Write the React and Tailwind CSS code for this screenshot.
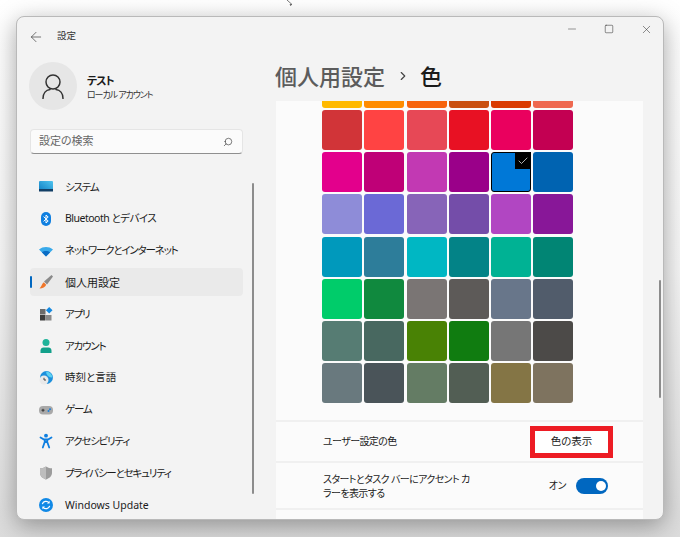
import React from "react";
import { ArrowLeft, Check, ChevronRight, Minus, Search, Square, X } from "lucide-react";

const FONT = "font-['Noto_Sans','Noto_Sans_CJK_JP',sans-serif] [font-feature-settings:'palt']";

const SWATCHES = [
  ["#ffb900", "#ff8c00", "#f7630c", "#ca5010", "#da3b01", "#ef6950"],
  ["#d13438", "#ff4343", "#e74856", "#e81123", "#ea005e", "#c30052"],
  ["#e3008c", "#bf0077", "#c239b3", "#9a0089", "#0078d7", "#0063b1"],
  ["#8e8cd8", "#6b69d6", "#8764b8", "#744da9", "#b146c2", "#881798"],
  ["#0099bc", "#2d7d9a", "#00b7c3", "#038387", "#00b294", "#018574"],
  ["#00cc6a", "#10893e", "#7a7574", "#5d5a58", "#68768a", "#515c6b"],
  ["#567c73", "#486860", "#498205", "#107c10", "#767676", "#4c4a48"],
  ["#69797e", "#4a5459", "#647c64", "#525e54", "#847545", "#7e735f"],
];

// colourful settings icons, drawn on a 16 box
const icons = {
  system: (
    <svg width="16" height="16" viewBox="0 0 16 16">
      <defs>
        <linearGradient id="sys" x1="0" y1="1" x2="1" y2="0">
          <stop offset="0" stopColor="#0f7fc4" />
          <stop offset="1" stopColor="#4fc3ee" />
        </linearGradient>
      </defs>
      <rect x="1" y="2" width="14" height="10" rx="1" fill="url(#sys)" />
      <rect x="1" y="10" width="14" height="2.5" fill="#123f66" />
    </svg>
  ),
  bluetooth: (
    <svg width="16" height="16" viewBox="0 0 16 16">
      <rect x="3" y="1" width="10" height="14" rx="5" fill="#0f7fe0" />
      <path d="M5.6 5.6 10.2 10 8 12V4l2.2 2-4.6 4.4" fill="none" stroke="#fff" strokeWidth="1" />
    </svg>
  ),
  wifi: (
    <svg width="16" height="16" viewBox="0 0 16 16">
      <path d="M1 6.5C5 3.2 11 3.2 15 6.5L8 13.5Z" fill="#38a9ea" />
      <path d="M3.8 9.3C6.2 7.5 9.8 7.5 12.2 9.3L8 13.5Z" fill="#0a6cc4" />
    </svg>
  ),
  brush: (
    <svg width="16" height="16" viewBox="0 0 16 16">
      <path d="M13.500 1 15 2.500 9 10.500 6 7.500Z" fill="#8a8a8a" />
      <path d="M5.800 8.300 8.200 10.700C7.500 13 4.500 14.500 1.500 14.500 3.500 13 3.500 10 5.800 8.300Z" fill="#f0762a" />
    </svg>
  ),
  apps: (
    <svg width="16" height="16" viewBox="0 0 16 16">
      <rect x="2" y="3" width="5.500" height="5.500" fill="#6b6b6b" />
      <rect x="2" y="9" width="5.500" height="5.500" fill="#3d3d3d" />
      <rect x="8" y="9" width="5.500" height="5.500" fill="#8a8a8a" />
      <path d="M11.200 1 14.500 4.300 11.200 7.600 7.900 4.300Z" fill="#1489e0" />
    </svg>
  ),
  account: (
    <svg width="16" height="16" viewBox="0 0 16 16">
      <circle cx="8" cy="4.500" r="3.500" fill="#1fb39a" />
      <path d="M2.500 15v-2.500C2.500 10.500 4 9.500 5.500 9.500h5c1.500 0 3 1 3 3V15Z" fill="#12a08a" />
    </svg>
  ),
  time: (
    <svg width="16" height="16" viewBox="0 0 16 16">
      <circle cx="8.500" cy="7.500" r="6.500" fill="#1c8fdc" />
      <path d="M8 1.500a6.500 6.500 0 0 1 6.500 6 6 6 0 0 1-6.500-6Z" fill="#5cd0f0" />
      <circle cx="6" cy="10" r="4.500" fill="#e9e9e9" />
      <path d="M6 7.800V10h2" fill="none" stroke="#444" strokeWidth="1" />
    </svg>
  ),
  game: (
    <svg width="16" height="16" viewBox="0 0 16 16">
      <rect x="1" y="4" width="14" height="8.500" rx="4" fill="#a9a9a9" />
      <path d="M3.500 8.200h3M5 6.800v3" stroke="#333" strokeWidth="1" />
      <circle cx="10.500" cy="9" r="1" fill="#1c7fd8" />
      <circle cx="12" cy="7.300" r="1" fill="#1c7fd8" />
    </svg>
  ),
  access: (
    <svg width="16" height="16" viewBox="0 0 16 16">
      <circle cx="8" cy="2.700" r="1.900" fill="#0f7fe0" />
      <path d="M2.500 4.500 6 6.500h4l3.500-2M7 6.500 6.700 9 4.800 14.500M9 6.500 9.300 9l1.900 5.500M6.700 9h2.600" fill="none" stroke="#0f7fe0" strokeWidth="1.800" strokeLinecap="round" />
    </svg>
  ),
  shield: (
    <svg width="16" height="16" viewBox="0 0 16 16">
      <path d="M8 1.500c2 1.300 4 1.800 6 1.800v4.500c0 3.300-2.500 5.500-6 6.700-3.500-1.200-6-3.400-6-6.700V3.300c2 0 4-.5 6-1.800Z" fill="#9c9c9c" />
      <path d="M8 1.500v13c-3.500-1.200-6-3.400-6-6.700V3.300c2 0 4-.5 6-1.800Z" fill="#bdbdbd" />
    </svg>
  ),
  update: (
    <svg width="16" height="16" viewBox="0 0 16 16">
      <circle cx="8" cy="8" r="7" fill="#1189e6" />
      <path d="M4.300 7.200A3.900 3.900 0 0 1 11 5.700M11.700 8.800A3.900 3.900 0 0 1 5 10.300" fill="none" stroke="#fff" strokeWidth="1.200" />
      <path d="M11.600 3.800v2.600H9zM4.400 12.200V9.600H7z" fill="#fff" />
    </svg>
  ),
};

// the reference's UI font sets kana tighter than Noto does, hence the tracking
const KANA = "text-[10.500px] tracking-[-1.200px]";

const NAV = [
  { icon: "system", label: "システム", text: KANA },
  { icon: "bluetooth", label: "Bluetooth とデバイス", text: "text-[10.500px] tracking-[-0.500px]" },
  { icon: "wifi", label: "ネットワークとインターネット", text: KANA },
  { icon: "brush", label: "個人用設定", text: "text-[11px]", active: true },
  { icon: "apps", label: "アプリ", text: KANA },
  { icon: "account", label: "アカウント", text: KANA },
  { icon: "time", label: "時刻と言語", text: "text-[10.500px]" },
  { icon: "game", label: "ゲーム", text: KANA },
  { icon: "access", label: "アクセシビリティ", text: KANA },
  { icon: "shield", label: "プライバシーとセキュリティ", text: KANA },
  { icon: "update", label: "Windows Update", text: "text-[10.500px]" },
];

function NavItem({ icon, label, text, active }) {
  return (
    <div className={`relative flex items-center h-[28px] mb-[3.8px] rounded pl-[8px] gap-[11px] ${active ? "bg-[#eaeaea]" : ""}`}>
      {active && <div className="absolute left-0 top-[8px] h-[12px] w-[2px] rounded bg-[#0067c0]" />}
      {icons[icon]}
      <span className={`pt-[1px] text-[#1b1b1b] whitespace-nowrap ${text}`}>{label}</span>
    </div>
  );
}

export default function App() {
  return (
    <div className={`${FONT} relative w-[680px] h-[537px] overflow-hidden bg-gradient-to-b from-[#ffffff] via-[#f6f6f6] to-[#dcdcdc] pt-[16px] pl-[16px]`}>
      {/* mouse pointer cut off by the top edge */}
      <svg className="absolute left-[286px] top-0" width="10" height="6" viewBox="0 0 10 6">
        <path d="M1 0 6 4.500H4L5 6" fill="#fff" stroke="#555" strokeWidth="0.800" />
      </svg>

      <div className="relative flex w-[648px] h-[504px] rounded-lg border border-[#b9b9b9] bg-[#f3f3f3] shadow-[0_6px_24px_rgba(0,0,0,0.35)] overflow-hidden">
        {/* sidebar */}
        <aside className="relative w-[258px] shrink-0">
          <div className="flex items-center h-[36px] pl-[11px] pt-[3px] gap-[13px] text-[#444]">
            <ArrowLeft size={16} strokeWidth={1.100} />
            <span className="text-[9.500px] text-[#333]">設定</span>
          </div>
          <div className="flex items-center pl-[12px] mt-[9px] gap-[10px]">
            <div className="flex items-center justify-center w-[48px] h-[48px] rounded-full bg-[#e6e6e6]">
              <svg width="22" height="25" viewBox="0 0 22 25" fill="none" stroke="#333" strokeWidth="1.500">
                <circle cx="11" cy="8" r="7" />
                <path d="M1 24.500c0-5 3-8.500 7-9M21 24.500c0-5-3-8.500-7-9" strokeLinecap="round" />
              </svg>
            </div>
            <div className="flex flex-col mt-[3px] leading-[14px]">
              <span className="text-[11px] tracking-[-1px] font-bold text-[#1b1b1b]">テスト</span>
              <span className="text-[9px] tracking-[-1.100px] text-[#333]">ローカル アカウント</span>
            </div>
          </div>
          <div className="flex items-center justify-between ml-[13px] mt-[19px] w-[213px] h-[25px] rounded border border-[#e5e5e5] border-b-[#8f8f8f] bg-[#fbfbfb] pl-[8px] pr-[9px]">
            <span className="text-[11px] text-[#666]">設定の検索</span>
            <Search size={10} strokeWidth={1.500} className="text-[#333] -scale-x-100" />
          </div>
          <nav className="ml-[13px] mt-[19px] w-[213px]">
            {NAV.map((item) => (
              <NavItem key={item.icon} {...item} />
            ))}
          </nav>
          {/* scrollbar */}
          <div className="absolute left-[235px] top-[166px] h-[311px] w-[2px] rounded bg-[#8c8c8c]" />
        </aside>

        {/* main */}
        <main className="relative flex-1 min-w-0 flex flex-col">
          <div className="flex justify-end items-center h-[24px] pr-[10px] gap-[25px] text-[#333]">
            <Minus size={12} strokeWidth={1} />
            <Square size={10} strokeWidth={1.300} className="mx-[1px]" />
            <X size={13} strokeWidth={1} />
          </div>
          <div className="flex items-center h-[32px] mt-[19px] text-[22px] leading-[32px]">
            <span className="text-[#5c5c5c] font-medium">個人用設定</span>
            <ChevronRight size={14} strokeWidth={2} className="ml-[11px] mr-[10px] text-[#444]" />
            <span className="text-[#1a1a1a] font-medium">色</span>
          </div>
          <div className="mt-[9px] ml-[1px] w-[367px] flex-1 overflow-hidden bg-[#fbfbfb]">
            <div className="pl-[46px] -mt-[33.500px] grid grid-cols-[repeat(6,40px)] gap-[2.250px]">
              {SWATCHES.flat().map((c) => {
                const picked = c === "#0078d7";
                return (
                  <div
                    key={c}
                    style={{ backgroundColor: c }}
                    className={`relative h-[40px] rounded-[3px] ${picked ? "border-[1.500px] border-black" : ""}`}
                  >
                    {picked && (
                      <div className="absolute -top-[1px] -right-[1px] w-[16px] h-[17px] bg-black flex items-center justify-center">
                        <Check size={12} strokeWidth={1.500} className="text-[#e8e8e8]" />
                      </div>
                    )}
                  </div>
                );
              })}
            </div>

            <div className="mt-[16.750px] h-[41px] flex items-center justify-between border-t-2 border-[#f0f0f0] pl-[47px] pr-[30px]">
              <span className="text-[10px] tracking-[-0.600px] text-[#1b1b1b]">ユーザー設定の色</span>
              <div className="flex items-center justify-center w-[83px] h-[32px] border-[5px] border-[#ed1c24] bg-white text-[10.500px] text-[#1b1b1b]">
                色の表示
              </div>
            </div>
            <div className="h-[47px] flex items-center justify-between border-t-2 border-[#f0f0f0] pl-[47px] pr-[35px]">
              <span className="text-[10px] tracking-[-0.600px] leading-[14px] text-[#1b1b1b] whitespace-nowrap">
                スタートとタスク バーにアクセント カ
                <br />
                ラーを表示する
              </span>
              <div className="flex items-center gap-[10px]">
                <span className="text-[10px] tracking-[-0.400px] text-[#1b1b1b]">オン</span>
                <div className="flex items-center justify-end w-[32px] h-[16px] rounded-full bg-[#0067c0] pr-[2px]">
                  <div className="w-[10px] h-[10px] rounded-full bg-white" />
                </div>
              </div>
            </div>
            <div className="border-t-2 border-[#f0f0f0] pl-[47px] pt-[7px] text-[10px] tracking-[-0.600px] text-[#1b1b1b] whitespace-nowrap">
              タイトル バーとウィンドウの境界線にアクセント カラーを表示する
            </div>
          </div>
          {/* scrollbar */}
          <div className="absolute right-[2px] top-[263px] h-[118px] w-[2px] rounded bg-[#8c8c8c]" />
        </main>
      </div>
    </div>
  );
}
